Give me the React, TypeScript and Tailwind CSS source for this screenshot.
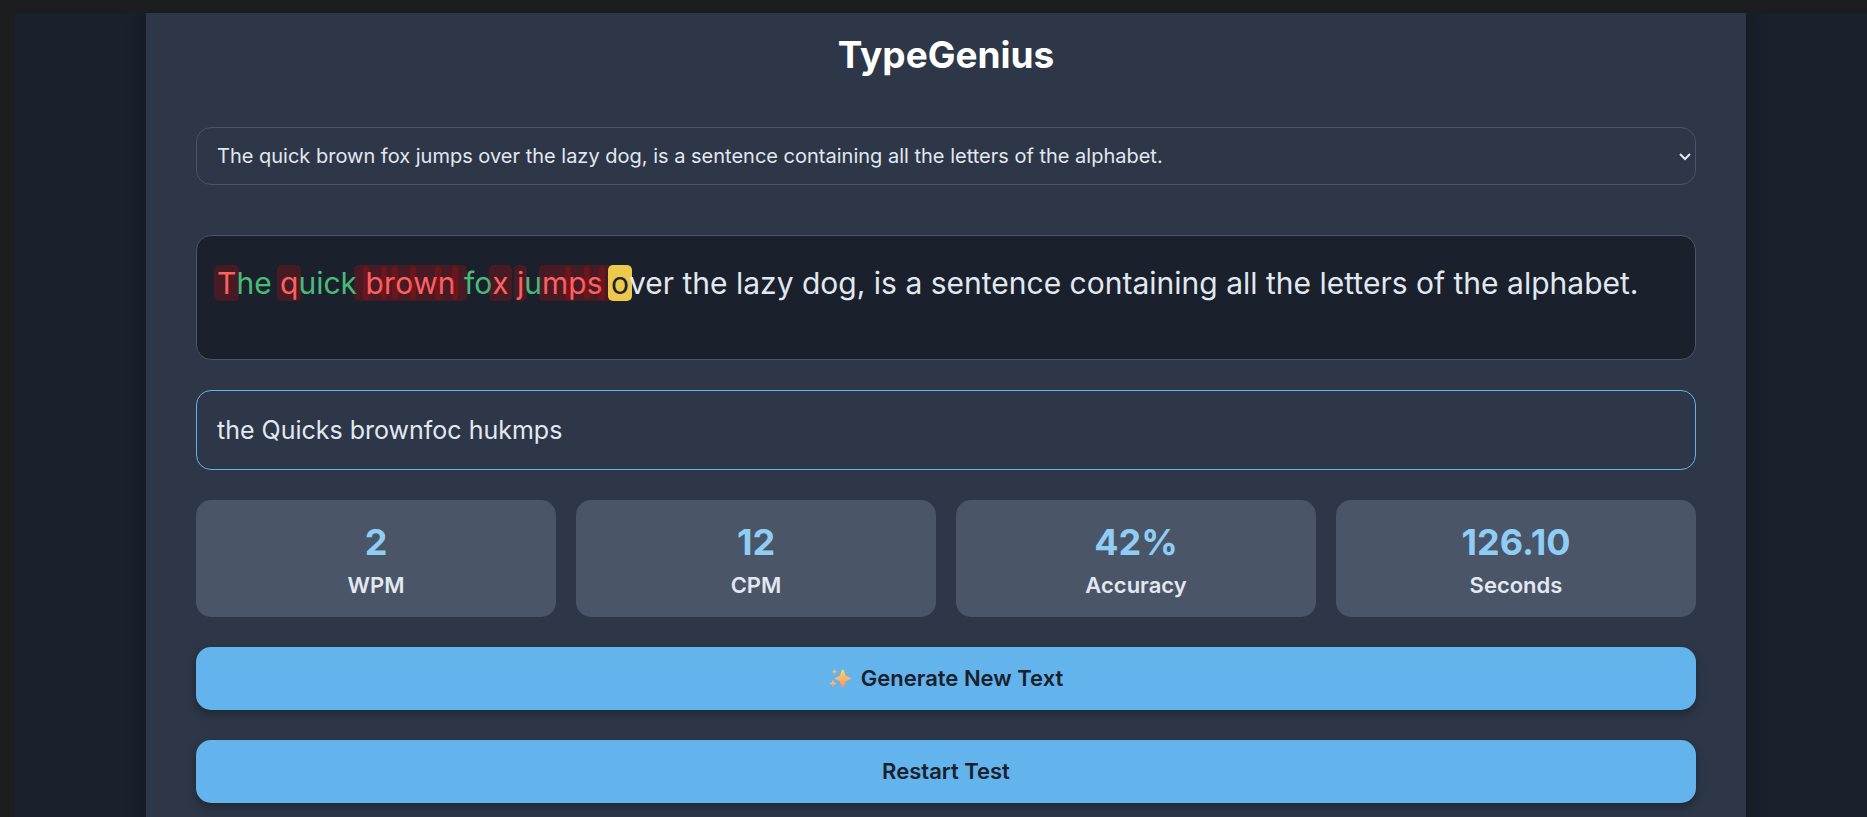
import { useState } from "react";

const SENTENCES = [
  "The quick brown fox jumps over the lazy dog, is a sentence containing all the letters of the alphabet.",
];

type CharState = "right" | "wrong" | "current" | "pending";

const CHAR_STYLES: Record<CharState, string> = {
  right: "text-[#48bb78]",
  wrong: "-mx-[3px] rounded-[5px] bg-[#ff0000]/20 px-[3px] text-[#ff6060]",
  current: "-mx-[3px] rounded-[5px] bg-[#ecc94b] px-[3px] text-[#1a202c]",
  pending: "",
};

// One mark per typed character: "." is correct, "x" is a mistake.
const MARKS = "x...x....xxxxxxx..x.x.xxxx";

function stateAt(index: number): CharState {
  if (index === MARKS.length) return "current";
  if (index > MARKS.length) return "pending";
  return MARKS[index] === "x" ? "wrong" : "right";
}

const STATS = [
  { value: "2", label: "WPM" },
  { value: "12", label: "CPM" },
  { value: "42%", label: "Accuracy" },
  { value: "126.10", label: "Seconds" },
];

function Sparkles() {
  return (
    <svg viewBox="0 0 24 24" className="h-[22px] w-[22px]" aria-hidden="true">
      <defs>
        <linearGradient id="spark" x1="0" y1="0" x2="0" y2="1">
          <stop offset="0" stopColor="#ffd84f" />
          <stop offset="0.5" stopColor="#fbb566" />
          <stop offset="1" stopColor="#f58a72" />
        </linearGradient>
      </defs>
      <g fill="url(#spark)">
        <path d="M15 1.500c.6 0 .9.3 1.100.9l1.700 5c.3.9.9 1.500 1.800 1.800l3.500 1.400c1.100.4 1.100 1.600 0 2l-3.500 1.400c-.9.3-1.500.9-1.800 1.800l-1.700 5.300c-.4 1.200-1.800 1.200-2.200 0l-1.700-5.300c-.3-.9-.9-1.500-1.800-1.800L7 12.600c-1.100-.4-1.100-1.600 0-2l3.400-1.400c.9-.3 1.500-.9 1.800-1.800l1.700-5c.2-.6.5-.9 1.100-.9z" />
        <path d="M6 .8l.9 2.500 2.400 1-2.400 1L6 8l-.9-2.700-2.400-1 2.400-1z" />
        <path d="M4.300 12.700l1.200 3.100 3 1.200-3 1.200-1.200 3.200-1.200-3.200-3-1.200 3-1.200z" />
      </g>
    </svg>
  );
}

function ActionButton({ children }: { children: React.ReactNode }) {
  return (
    <button
      type="button"
      className="flex h-[63px] w-full items-center justify-center gap-2.5 rounded-[15px] bg-[#63b3ed] text-[22px] font-semibold text-[#1a202c] shadow-[0_4px_10px_rgba(0,0,0,0.3)]"
    >
      {children}
    </button>
  );
}

export default function App() {
  const [sentence, setSentence] = useState(SENTENCES[0]);
  const [typed, setTyped] = useState("the Quicks brownfoc hukmps");

  return (
    <div className="flex h-screen overflow-hidden bg-[#1c1d1e] pt-[13px] pl-[15px] font-['Inter',sans-serif] text-[#e2e8f0]">
      <div className="flex flex-1 justify-center overflow-hidden bg-[#1a202c] pl-[10px]">
        <main className="flex min-h-max w-full max-w-[1600px] flex-col gap-[30px] bg-[#2d3748] px-[50px] pb-[50px] shadow-[0_0_20px_rgba(0,0,0,0.3)]">
          <h1 className="py-[18px] text-center text-[37px] leading-[48px] font-bold text-white">
            TypeGenius
          </h1>

          <div className="relative mb-5 shrink-0">
            <select
              aria-label="Sentence"
              value={sentence}
              onChange={(e) => setSentence(e.target.value)}
              className="block h-[58px] w-full appearance-none rounded-[15px] border border-[#4a5568] bg-[#2d3748] px-5 text-[20px]"
            >
              {SENTENCES.map((s) => (
                <option key={s}>{s}</option>
              ))}
            </select>
            <svg
              viewBox="0 0 12 8"
              className="pointer-events-none absolute top-[26px] right-[5px] h-2 w-3"
              fill="none"
              stroke="#e2e8f0"
              strokeWidth="2"
              aria-hidden="true"
            >
              <path d="M1 1l5 5 5-5" />
            </svg>
          </div>

          <p className="min-h-[125px] rounded-[15px] border border-[#4a5568] bg-[#1a202c] px-5 py-5 text-[30px] leading-[54px]">
            {sentence.split("").map((ch, i) => (
              <span key={i} className={CHAR_STYLES[stateAt(i)]}>
                {ch}
              </span>
            ))}
          </p>

          <input
            type="text"
            aria-label="Type the sentence"
            value={typed}
            onChange={(e) => setTyped(e.target.value)}
            className="h-[80px] w-full shrink-0 rounded-[15px] border border-[#63b3ed] bg-[#2d3748] px-5 text-[25px] outline-none"
          />

          <section className="grid grid-cols-4 gap-5">
            {STATS.map((s) => (
              <div
                key={s.label}
                className="flex h-[117px] flex-col items-center rounded-[15px] bg-[#4a5568] pt-5"
              >
                <span className="text-[36px] leading-[45px] font-bold text-[#90cdf4]">{s.value}</span>
                <span className="text-[22px] leading-10 font-semibold">{s.label}</span>
              </div>
            ))}
          </section>

          <ActionButton>
            <Sparkles />
            Generate New Text
          </ActionButton>
          <ActionButton>Restart Test</ActionButton>
        </main>
      </div>
    </div>
  );
}
